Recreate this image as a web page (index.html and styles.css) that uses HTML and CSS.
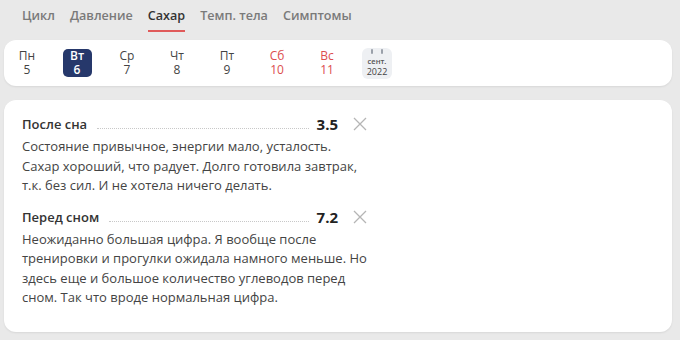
FILE: index.html
```html
<!DOCTYPE html>
<html lang="ru">
<head>
<meta charset="utf-8">
<link rel="stylesheet" href="styles.css">
</head>
<body>
<nav class="tabs">
  <span class="tab">Цикл</span>
  <span class="tab">Давление</span>
  <span class="tab active">Сахар</span>
  <span class="tab">Темп. тела</span>
  <span class="tab">Симптомы</span>
</nav>
<div class="week">
  <div class="day"><div class="box"><span>Пн</span><span>5</span></div></div>
  <div class="day sel"><div class="box"><span>Вт</span><span>6</span></div></div>
  <div class="day"><div class="box"><span>Ср</span><span>7</span></div></div>
  <div class="day"><div class="box"><span>Чт</span><span>8</span></div></div>
  <div class="day"><div class="box"><span>Пт</span><span>9</span></div></div>
  <div class="day we"><div class="box"><span>Сб</span><span>10</span></div></div>
  <div class="day we"><div class="box"><span>Вс</span><span>11</span></div></div>
  <div class="day"><div class="cal"><span class="m">сент.</span><span class="y">2022</span></div></div>
</div>
<div class="card">
  <div class="entry">
    <div class="row">
      <span class="title">После сна</span>
      <span class="dots"></span>
      <span class="val">3.5</span>
      <svg class="x" width="14" height="14" viewBox="0 0 14 14"><path d="M1 1L13 13M13 1L1 13" stroke="#b5b5b5" stroke-width="1.3" fill="none"/></svg>
    </div>
    <p class="note">Состояние привычное, энергии мало, усталость. Сахар хороший, что радует. Долго готовила завтрак, т.к. без сил. И не хотела ничего делать.</p>
  </div>
  <div class="entry">
    <div class="row">
      <span class="title">Перед сном</span>
      <span class="dots"></span>
      <span class="val">7.2</span>
      <svg class="x" width="14" height="14" viewBox="0 0 14 14"><path d="M1 1L13 13M13 1L1 13" stroke="#b5b5b5" stroke-width="1.3" fill="none"/></svg>
    </div>
    <p class="note">Неожиданно большая цифра. Я вообще после тренировки и прогулки ожидала намного меньше. Но здесь еще и большое количество углеводов перед сном. Так что вроде нормальная цифра.</p>
  </div>
</div>
</body>
</html>
```
FILE: styles.css
```css
* { box-sizing: border-box; }
html, body { margin: 0; padding: 0; }
body {
  width: 680px;
  height: 340px;
  overflow: hidden;
  background: #e9e9e9;
  font-family: "Open Sans", "Noto Sans", sans-serif;
  color: #333;
}
.tabs {
  display: flex;
  gap: 15px;
  padding: 6px 0 0 22px;
  height: 40px;
}
.tab {
  font-size: 12.6px;
  font-weight: 600;
  color: #7a7a7a;
  line-height: 20px;
  height: 26px;
}
.tab.active {
  color: #333;
  border-bottom: 2px solid #e05a5a;
}
.week {
  margin: 0 8px 0 4px;
  height: 46px;
  background: #fff;
  border-radius: 12px;
  box-shadow: 0 1px 2px rgba(0,0,0,0.08);
  display: flex;
  align-items: center;
  gap: 4px;
}
.day {
  width: 46px;
  display: flex;
  justify-content: center;
}
.box {
  width: 29px;
  height: 28px;
  border-radius: 5px;
  display: flex;
  flex-direction: column;
  align-items: center;
  justify-content: center;
  font-size: 12px;
  line-height: 14px;
  color: #444;
}
.sel .box {
  background: #26386b;
  color: #fff;
  font-weight: 600;
}
.we .box { color: #dc4e4e; }
.cal {
  width: 30px;
  height: 31px;
  background: #eef0f3;
  border-radius: 6px;
  display: flex;
  flex-direction: column;
  align-items: center;
  justify-content: flex-end;
  padding-bottom: 2px;
  position: relative;
}
.cal::before, .cal::after {
  content: "";
  position: absolute;
  top: 1px;
  width: 2px;
  height: 5px;
  background: #9aa0aa;
  border-radius: 1px;
}
.cal::before { left: 9px; }
.cal::after { right: 9px; }
.cal .m { font-size: 7.5px; line-height: 10px; font-weight: 600; color: #555; }
.cal .y { font-size: 9px; line-height: 11px; color: #444; }
.card {
  margin: 14px 8px 0 4px;
  height: 232px;
  background: #fff;
  border-radius: 12px;
  box-shadow: 0 1px 2px rgba(0,0,0,0.08);
  padding: 13px 0 0 18px;
}
.entry { width: 345px; margin-bottom: 10px; }
.row {
  display: flex;
  align-items: center;
  height: 22px;
}
.title {
  font-size: 13px;
  font-weight: 600;
  color: #333;
}
.dots {
  flex: 1;
  align-self: flex-end;
  margin: 0 8px 6px 10px;
  border-bottom: 1px dotted #c8c8c8;
}
.val {
  font-size: 15px;
  font-weight: 700;
  color: #222;
}
.x { margin-left: 15px; flex: none; }
.note {
  margin: 2px 0 0;
  font-size: 13px;
  line-height: 19.5px;
  color: #444;
}
```
